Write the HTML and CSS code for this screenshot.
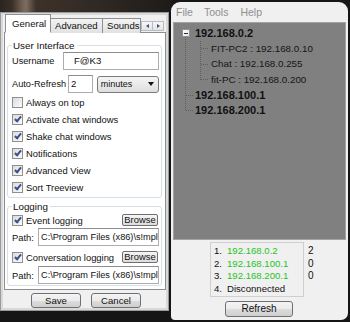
FILE: index.html
```html
<!DOCTYPE html>
<html>
<head>
<meta charset="utf-8">
<link rel="stylesheet" href="styles.css">
</head>
<body>
<div class="desk">
  <div class="win-left">
    <div class="tabs">
      <div class="tab sel">General</div>
      <div class="tab">Advanced</div>
      <div class="tab last">Sounds</div>
      <div class="arrows">
        <span class="arr"><i class="tri-l"></i></span>
        <span class="arr"><i class="tri-r"></i></span>
      </div>
    </div>
    <div class="panel">
      <div class="group g1">
        <span class="gtitle">User Interface</span>
        <div class="frow">
          <span class="lbl l-user">Username</span>
          <span class="inp i-user">F@K3</span>
        </div>
        <div class="frow r-auto">
          <span class="lbl l-auto">Auto-Refresh</span>
          <span class="inp i-num">2</span>
          <span class="sel-box">minutes<i class="dd"></i></span>
        </div>
        <div class="cbrow"><span class="cb"></span>Always on top</div>
        <div class="cbrow"><span class="cb on"></span>Activate chat windows</div>
        <div class="cbrow"><span class="cb on"></span>Shake chat windows</div>
        <div class="cbrow"><span class="cb on"></span>Notifications</div>
        <div class="cbrow"><span class="cb on"></span>Advanced View</div>
        <div class="cbrow"><span class="cb on"></span>Sort Treeview</div>
      </div>
      <div class="group g2">
        <span class="gtitle">Logging</span>
        <div class="lrow"><span class="cb on"></span><span class="grow">Event logging</span><span class="btn-s">Browse</span></div>
        <div class="prow"><span class="lbl l-path">Path:</span><span class="inp i-path">C:\Program Files (x86)\s!mpl</span></div>
        <div class="lrow r-conv"><span class="cb on"></span><span class="grow">Conversation logging</span><span class="btn-s">Browse</span></div>
        <div class="prow r-p2"><span class="lbl l-path">Path:</span><span class="inp i-path">C:\Program Files (x86)\s!mpl</span></div>
      </div>
    </div>
    <div class="btns">
      <span class="btn b-save">Save</span>
      <span class="btn b-cancel">Cancel</span>
    </div>
  </div>

  <div class="win-right">
    <div class="menu"><span>File</span><span>Tools</span><span>Help</span></div>
    <div class="tree">
      <svg class="lines" width="172" height="217" viewBox="0 0 172 217">
        <g stroke="#5e5e5e" stroke-width="1" stroke-dasharray="1 1" fill="none">
          <line x1="11.5" y1="14" x2="11.5" y2="87"/>
          <line x1="12" y1="72.5" x2="20" y2="72.5"/>
          <line x1="12" y1="87.5" x2="20" y2="87.5"/>
          <line x1="26.5" y1="18" x2="26.5" y2="57"/>
          <line x1="27" y1="25.5" x2="35" y2="25.5"/>
          <line x1="27" y1="41.5" x2="35" y2="41.5"/>
          <line x1="27" y1="56.5" x2="35" y2="56.5"/>
        </g>
      </svg>
      <div class="trow root"><span class="minus"><i></i></span>192.168.0.2</div>
      <div class="trow child">FIT-PC2 : 192.168.0.10</div>
      <div class="trow child">Chat : 192.168.0.255</div>
      <div class="trow child">fit-PC : 192.168.0.200</div>
      <div class="trow top">192.168.100.1</div>
      <div class="trow top">192.168.200.1</div>
    </div>
    <div class="bottom">
      <div class="list">
        <div class="li"><span class="n">1.</span><span class="ip">192.168.0.2</span></div>
        <div class="li"><span class="n">2.</span><span class="ip">192.168.100.1</span></div>
        <div class="li"><span class="n">3.</span><span class="ip">192.168.200.1</span></div>
        <div class="li"><span class="n">4.</span><span>Disconnected</span></div>
      </div>
      <div class="counts">
        <div class="li">2</div>
        <div class="li">0</div>
        <div class="li">0</div>
      </div>
    </div>
    <div class="refresh-row"><span class="btn b-refresh">Refresh</span></div>
  </div>
</div>
</body>
</html>
```

FILE: styles.css
```css
html, body {
  margin: 0;
  padding: 0;
}
body {
  width: 350px;
  height: 322px;
  overflow: hidden;
  background-color: #151515;
  background-image: linear-gradient(90deg, #2a2420 0, #3a3029 12px, #6e6052 22px, #7c6d5f 26px, #3d3229 36px, #2f2924 100px, #1e1b19 170px, #161616 175px);
  background-size: 350px 12px;
  background-repeat: no-repeat;
  font-family: "Liberation Sans", Arial, sans-serif;
  font-size: 9.2px;
  color: #111;
}
.desk {
  display: flex;
  align-items: flex-start;
}

/* ---------- left window ---------- */
.win-left {
  margin-top: 12px;
  width: 169px;
  height: 299px;
  box-sizing: border-box;
  background: #f0f0f0;
  border: 1px solid #9a9a9a;
  box-shadow: inset 0 0 0 2px #d9d9d9;
  padding: 1px 0 0 3px;
}
.tabs {
  display: flex;
  align-items: flex-end;
  height: 19px;
  margin-left: 1px;
  position: relative;
  z-index: 2;
}
.tab {
  height: 15px;
  box-sizing: border-box;
  border: 1px solid #8c8e94;
  border-bottom: none;
  background: linear-gradient(#f3f3f3, #e1e1e1);
  padding: 0 0 0 4px;
  line-height: 14px;
  width: 53px;
  margin-left: -1px;
  overflow: hidden;
  white-space: nowrap;
  font-size: 9.6px;
}
.tab.sel {
  height: 19px;
  width: 46px;
  margin-left: 0;
  background: #fff;
  padding-left: 6px;
  line-height: 17px;
  border-bottom: 1px solid #fff;
  position: relative;
  z-index: 3;
}
.tab.last {
  width: 39px;
}
.arrows {
  display: flex;
  margin-bottom: 2px;
}
.arr {
  width: 12px;
  height: 10px;
  box-sizing: border-box;
  border: 1px solid #b8bcc4;
  background: linear-gradient(#f7f7f7, #e4e4e4);
  display: flex;
  align-items: center;
  justify-content: center;
  margin-left: -1px;
}
.arr:first-child { margin-left: 0; }
.tri-l, .tri-r {
  width: 0;
  height: 0;
  border-top: 2px solid transparent;
  border-bottom: 2px solid transparent;
}
.tri-l { border-right: 3px solid #3d4f7e; }
.tri-r { border-left: 3px solid #3d4f7e; }

.panel {
  margin-top: -1px;
  width: 162px;
  height: 258px;
  box-sizing: border-box;
  border: 1px solid #8c8e94;
  background: #fff;
  padding: 12px 3px 0 2px;
  position: relative;
  z-index: 1;
}
.group {
  border: 1px solid #d5dfe5;
  border-radius: 3px;
  padding: 0 2px 0 4px;
}
.g1 { height: 153px; box-sizing: border-box; }
.g2 { margin-top: 8px; height: 80px; box-sizing: border-box; }
.gtitle {
  display: block;
  width: fit-content;
  margin: -7px 0 0 0;
  padding: 0 2px 0 1px;
  background: #fff;
  line-height: 13px;
  height: 13px;
  font-size: 9.8px;
}
.frow {
  display: flex;
  align-items: center;
  height: 18px;
  white-space: nowrap;
}
.r-auto { margin-top: 5px; }
.lbl { flex: none; white-space: nowrap; }
.l-user { width: 51px; }
.l-auto { width: 56px; }
.inp {
  box-sizing: border-box;
  border: 1px solid #abadb3;
  border-top-color: #8a8c92;
  background: #fff;
  height: 18px;
  line-height: 16px;
  white-space: nowrap;
  overflow: hidden;
}
.i-user { width: 97px; padding-left: 10px; font-size: 9.6px; }
.i-num { width: 25px; padding-left: 2px; font-size: 9.6px; }
.sel-box {
  margin-left: 4px;
  width: 63px;
  height: 17px;
  box-sizing: border-box;
  border: 1px solid #7a7a7a;
  border-radius: 3px;
  background: linear-gradient(#f4f4f4, #dedede);
  padding-left: 3px;
  display: flex;
  align-items: center;
  justify-content: space-between;
  font-size: 9px;
}
.dd {
  width: 0;
  height: 0;
  border-left: 3.5px solid transparent;
  border-right: 3.5px solid transparent;
  border-top: 4px solid #111;
  margin-right: 4px;
}
.cbrow {
  display: flex;
  align-items: center;
  height: 17px;
  white-space: nowrap;
  font-size: 9.4px;
}
.cbrow:nth-of-type(3) { margin-top: 1px; }
.cb {
  flex: none;
  width: 11px;
  height: 11px;
  box-sizing: border-box;
  border: 1px solid #8e8f8f;
  background: linear-gradient(135deg, #dcdcdc, #fbfbfb);
  margin-right: 3px;
  display: flex;
  justify-content: center;
}
.cb.on::after {
  content: "";
  width: 2px;
  height: 5px;
  border: solid #3a4f8c;
  border-width: 0 2px 2px 0;
  transform: rotate(40deg);
  margin-top: 0px;
}
.lrow {
  display: flex;
  align-items: center;
  height: 14px;
  font-size: 9.4px;
}
.grow { flex: 1; white-space: nowrap; }
.btn-s {
  width: 36px;
  height: 12px;
  box-sizing: border-box;
  border: 1px solid #707070;
  border-radius: 2px;
  background: linear-gradient(#f5f5f5, #dcdcdc);
  line-height: 10px;
  text-align: center;
  margin-right: 1px;
}
.prow {
  display: flex;
  align-items: center;
  height: 18px;
  margin-top: 1px;
}
.l-path { width: 26px; font-size: 9.4px; }
.i-path { width: 121px; padding-left: 2px; }
.r-conv { margin-top: 4px; }
.r-p2 { margin-top: 2px; }

.btns {
  display: flex;
  margin-top: 3px;
  padding-left: 27px;
  gap: 10px;
}
.btn {
  height: 15px;
  box-sizing: border-box;
  border: 1px solid #707070;
  border-radius: 3px;
  background: linear-gradient(#f4f4f4 0, #ebebeb 50%, #dddddd 51%, #cfcfcf 100%);
  text-align: center;
  line-height: 13px;
  font-size: 9.6px;
}
.b-save { width: 50px; }
.b-cancel { width: 50px; }

/* ---------- right window ---------- */
.win-right {
  margin-left: 2px;
  margin-top: 2px;
  width: 177px;
  height: 318px;
  box-sizing: border-box;
  background: #f0f0f0;
  border-radius: 9px 9px 7px 4px;
  padding: 0 2px;
}
.menu {
  height: 20px;
  display: flex;
  align-items: center;
  font-size: 10.5px;
  color: #8f8f8f;
  padding-left: 3px;
  gap: 11px;
}
.menu span:nth-child(3) { margin-left: 1px; }
.tree {
  position: relative;
  height: 218px;
  box-sizing: border-box;
  border: 1px solid #a3a3a3;
  background: #808080;
  padding-top: 2.5px;
}
.lines {
  position: absolute;
  left: 0;
  top: 0;
}
.trow {
  height: 15.4px;
  display: flex;
  align-items: center;
  white-space: nowrap;
  position: relative;
}
.root, .top {
  font-weight: bold;
  font-size: 11px;
  padding-left: 21px;
}
.root { padding-left: 8px; }
.child {
  font-size: 9.8px;
  padding-left: 37px;
  color: #151515;
}
.minus {
  width: 8px;
  height: 8px;
  box-sizing: border-box;
  border: 1px solid #8f9191;
  background: linear-gradient(135deg, #ffffff, #e2e2e2);
  margin-right: 5px;
  display: flex;
  align-items: center;
  justify-content: center;
}
.minus i {
  width: 4px;
  height: 1px;
  background: #1d2e5e;
}
.bottom {
  display: flex;
  margin-top: 2px;
  padding-left: 37px;
}
.list {
  width: 94px;
  height: 55px;
  box-sizing: border-box;
  border: 1px solid #cfcfcf;
  padding: 2px 0 0 3px;
  font-size: 9.6px;
}
.li {
  height: 12.7px;
  line-height: 12.7px;
  white-space: nowrap;
}
.n {
  display: inline-block;
  width: 13px;
}
.ip { color: #1fc41f; }
.counts {
  padding: 3px 0 0 4px;
  font-size: 10px;
}
.refresh-row {
  margin-top: 4px;
  padding-left: 52px;
}
.b-refresh {
  display: block;
  width: 68px;
  height: 16px;
  line-height: 14px;
  font-size: 10px;
}
```
